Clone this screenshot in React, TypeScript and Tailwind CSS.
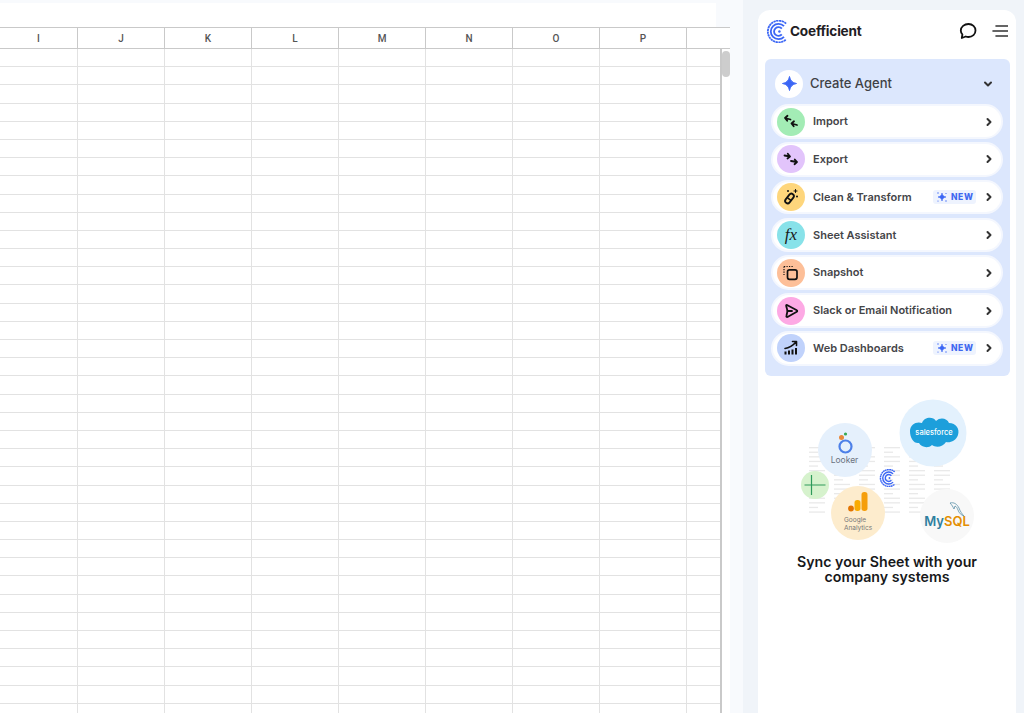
import type { ReactNode } from 'react';

const columns = ['I', 'J', 'K', 'L', 'M', 'N', 'O', 'P', ''];
const rowNumbers = Array.from({ length: 37 }, (_, i) => i);

function Chevron() {
  return (
    <svg width="8" height="10" viewBox="0 0 8 10" fill="none" stroke="#333" strokeWidth="2" strokeLinecap="round" strokeLinejoin="round">
      <path d="M2.500 2 5.500 5 2.500 8" />
    </svg>
  );
}

function Sparkle({ size, color = '#3b66f5' }: { size: number; color?: string }) {
  return (
    <svg width={size} height={size} viewBox="0 0 16 16" fill={color}>
      <path d="M8 .5C8.800 4.800 11 7.200 15.500 8 11 8.800 8.800 11.200 8 15.500 7.200 11.200 5 8.800.5 8 5 7.200 7.200 4.800 8 .5Z" stroke={color} strokeWidth="1" strokeLinejoin="round" />
    </svg>
  );
}

function NewBadge() {
  return (
    <span className="flex items-center gap-[3px] h-[14px] w-[43px] pl-[3px] rounded-[3px] bg-[#eef3fe] text-[8.5px] font-extrabold tracking-[0.6px] text-[#3f68f0]">
      <svg width="12" height="12" viewBox="0 0 12 12" fill="#3b66f5">
        <path d="M6 2c.3 2.200 1.600 3.600 4 4-2.400.4-3.700 1.800-4 4-.3-2.200-1.600-3.600-4-4 2.400-.4 3.700-1.800 4-4Z" stroke="#3b66f5" strokeWidth=".6" />
        <circle cx="2" cy="2" r=".7" />
        <circle cx="10" cy="2.500" r=".6" />
        <circle cx="2" cy="10" r=".6" />
        <circle cx="10" cy="10" r=".7" />
      </svg>
      NEW
    </span>
  );
}

const stroke = { fill: 'none', stroke: '#111', strokeWidth: 1.8, strokeLinecap: 'round', strokeLinejoin: 'round' } as const;

const ImportIcon = (
  <svg width="16" height="16" viewBox="0 0 16 16" {...stroke}>
    <path d="M7.500 5.500 2 4M4.500 1.800 2 4l2.200 2.800" />
    <path d="M14 11 8.500 9.500M11 7.300 8.500 9.500l2.200 2.800" />
  </svg>
);

const ExportIcon = (
  <svg width="16" height="16" viewBox="0 0 16 16" {...stroke}>
    <path d="M1.500 4.500 7 5.500M4.800 2.800 7 5.500 4.500 7.500" />
    <path d="M8 10l6 1M11.800 8.500 14 11l-2.500 2.200" />
  </svg>
);

const WandIcon = (
  <svg width="18" height="18" viewBox="0 0 18 18" fill="none" stroke="#111">
    <rect x="-2.500" y="-5.500" width="5" height="11" rx="2.500" transform="translate(7.500 10.500) rotate(38)" strokeWidth="1.800" />
    <path d="M5.500 9.800l3.800 2.900" strokeWidth="1.500" />
    <path d="M13.500 1.500v3M12 3h3" strokeWidth="1" strokeLinecap="round" />
    <circle cx="6" cy="3" r="1" fill="#111" stroke="none" />
    <circle cx="15" cy="8.500" r="1" fill="#111" stroke="none" />
  </svg>
);

const FxIcon = (
  <span className="font-['Liberation_Serif',serif] italic text-[17px] leading-none text-[#1a1a1a]">fx</span>
);

const SnapshotIcon = (
  <svg width="16" height="16" viewBox="0 0 16 16" fill="none" stroke="#111">
    <path d="M1 1.500h9M1 1.500v8.500" strokeWidth="1.200" strokeDasharray="1.200 1.300" />
    <rect x="4.500" y="4.800" width="9.500" height="9.500" rx="2" strokeWidth="1.700" />
  </svg>
);

const SendIcon = (
  <svg width="16" height="16" viewBox="0 0 16 16" fill="none" stroke="#111" strokeWidth="1.800" strokeLinejoin="round" strokeLinecap="round">
    <path d="M4 2 13.800 7.300c.6.300.6 1.100 0 1.400L4.500 14c-.8.300-1.300-.3-1.100-1L4.500 8 3.200 3c-.2-.8.200-1.300.8-1Z" />
    <path d="M4.500 8H9" />
  </svg>
);

const DashIcon = (
  <svg width="16" height="16" viewBox="0 0 16 16" fill="none" stroke="#111" strokeLinecap="round">
    <path d="M2 8.500c4-.5 7.500-2.500 11-6.500M9.500 1.500h4v4" strokeWidth="1.600" strokeLinejoin="round" />
    <path d="M2.500 11.500v3M6 10.500v4M9.500 9.500v5M13 8v6.500" strokeWidth="2" strokeLinecap="butt" />
  </svg>
);

type Item = { label: string; color: string; icon: ReactNode; isNew?: boolean };

const items: Item[] = [
  { label: 'Import', color: 'bg-[#a3ecb5]', icon: ImportIcon },
  { label: 'Export', color: 'bg-[#e2c4fb]', icon: ExportIcon },
  { label: 'Clean & Transform', color: 'bg-[#fed67c]', icon: WandIcon, isNew: true },
  { label: 'Sheet Assistant', color: 'bg-[#88e2e9]', icon: FxIcon },
  { label: 'Snapshot', color: 'bg-[#fdbf98]', icon: SnapshotIcon },
  { label: 'Slack or Email Notification', color: 'bg-[#fda9e4]', icon: SendIcon },
  { label: 'Web Dashboards', color: 'bg-[#c0d2fb]', icon: DashIcon, isNew: true },
];

function CoefLogo({ size }: { size: number }) {
  return (
    <svg width={size} height={size} viewBox="0 0 24 24" fill="none" stroke="#3b66f5" strokeLinecap="butt">
      <path d="M21 3.800A11.300 11.300 0 1 0 21 20.200" strokeWidth="1.900" strokeDasharray="2.400 .5" />
      <path d="M18.800 6.500A8 8 0 1 0 18.800 17.500" strokeWidth="1.900" />
      <path d="M16.500 9A4.600 4.600 0 1 0 16.500 15" strokeWidth="1.900" />
      <circle cx="14" cy="12" r="1.300" fill="#3b66f5" stroke="none" />
    </svg>
  );
}

function Illustration() {
  const lineRows = [0, 1, 2, 3, 4, 5, 6, 7, 8, 9, 10, 11, 12, 13, 14];
  const lineCols = [29, 54, 79, 104, 129, 154];
  return (
    <svg width="210" height="155" viewBox="0 0 210 155" className="block">
      {lineCols.map((x) =>
        lineRows.map((r) => (
          <rect key={x + '-' + r} x={x} y={57 + r * 4.600} width={r % 3 === 1 ? 9 : 16} height="1.300" fill="#e9e9e9" />
        ))
      )}
      <circle cx="153" cy="43" r="33.500" fill="#e3f1fd" />
      <path d="M130 41c0-7 7-10 12-8 2-6 11-7 14-2 4-4 11-3 13 2 7 0 11 6 9 12-2 6-8 8-12 7-3 5-10 6-14 3-4 4-11 2-13-2-5 1-9-5-9-12Z" fill="#1d9fdb" />
      <text x="154" y="45" textAnchor="middle" fontSize="7.500" fill="#fff" fontFamily="Inter, sans-serif" fontWeight="500">salesforce</text>

      <circle cx="65" cy="60" r="27" fill="#e5f0fc" />
      <circle cx="65.500" cy="56.500" r="6" fill="none" stroke="#4d80e8" strokeWidth="2.200" />
      <circle cx="61.500" cy="47.500" r="2.500" fill="#e8873a" />
      <circle cx="65.500" cy="44" r="1.600" fill="#34a853" />
      <text x="64.500" y="73" textAnchor="middle" fontSize="8.500" fill="#6b7280" fontFamily="Inter, sans-serif">Looker</text>

      <circle cx="35" cy="95" r="14" fill="#d6f2cd" />
      <path d="M24.500 95h21M31.500 85v20" stroke="#2e9a5b" strokeWidth="1.200" />

      <g transform="translate(99 79)">
        <CoefLogo size={18} />
      </g>

      <circle cx="78" cy="123" r="27" fill="#fdeccd" />
      <rect x="81.500" y="102" width="6" height="19" rx="2.700" fill="#f59e0b" />
      <rect x="74.500" y="110" width="6" height="11" rx="2.700" fill="#f9ab00" />
      <circle cx="71" cy="118.500" r="2.900" fill="#e37400" />
      <text x="75" y="132" textAnchor="middle" fontSize="6.500" fill="#777" fontFamily="Inter, sans-serif">Google</text>
      <text x="78" y="139.500" textAnchor="middle" fontSize="6.500" fill="#777" fontFamily="Inter, sans-serif">Analytics</text>

      <circle cx="167" cy="126" r="27" fill="#f8f8f8" />
      <text x="167" y="136" textAnchor="middle" fontSize="13" fontWeight="600" fontFamily="Inter, sans-serif">
        <tspan fill="#2f7f9f">My</tspan>
        <tspan fill="#e48e00">SQL</tspan>
      </text>
      <path d="M170 113c4-1 7 1 9 5 1 3 3 6 5 8-3-1-5-3-6-6-1-2-1-3-3-4l-1 3c-1-2-2-4-4-6Z" fill="none" stroke="#5c91a8" strokeWidth=".8" />
    </svg>
  );
}

export default function App() {
  return (
    <div className="flex h-[713px] w-[1024px] overflow-hidden bg-[#f0f4f9] font-['Inter',sans-serif]">
      {/* sheet */}
      <div className="w-[743px] shrink-0 bg-[#f8fafd]">
        <div className="h-[3px]" />
        <div className="h-[24px] w-[716px] bg-white" />
        <div className="w-[730px] bg-white font-['Roboto',sans-serif]">
          <div className="grid grid-cols-[78px_repeat(8,87px)_36px_1fr] h-[22px] border-y border-[#c9c9c9]">
            {columns.map((c, i) => (
              <div key={i} className="flex items-center justify-center border-r border-[#c9c9c9] text-[10px] font-medium text-[#555]">
                {c}
              </div>
            ))}
            <div className="border-r-2 border-[#c4c4c4]" />
            <div className="bg-[#f8f8f8]" />
          </div>
          <div className="flex">
            <div className="w-[722px] border-r-2 border-[#c9c9c9]">
              {rowNumbers.map((r) => (
                <div key={r} className="grid grid-cols-[78px_repeat(8,87px)_1fr] h-[18.2px] border-b border-[#e2e2e2]">
                  {columns.map((_, i) => (
                    <div key={i} className="border-r border-[#e2e2e2]" />
                  ))}
                </div>
              ))}
            </div>
            <div className="w-[8px] pt-[2px]">
              <div className="h-[26px] w-[8px] rounded-full bg-[#cdcdcd]" />
            </div>
          </div>
        </div>
      </div>

      {/* side panel */}
      <div className="w-[15px] shrink-0" />
      <div className="mt-[10px] w-[258px] shrink-0 rounded-t-[12px] bg-white">
        <div className="flex items-center h-[42px] pl-[8px] pr-[8px]">
          <CoefLogo size={23} />
          <span className="ml-[1px] text-[13.6px] font-bold text-[#1f2024] tracking-[-0.2px]">Coefficient</span>
          <svg className="ml-auto" width="18" height="18" viewBox="0 0 18 18" fill="none" stroke="#111" strokeWidth="1.800" strokeLinejoin="round">
            <path d="M9.500 2C13.500 2 16.500 4.800 16.500 8.500S13.500 15 9.500 15c-1 0-2-.2-2.800-.5L2.800 16l.6-3.500C2.300 11.300 1.800 10 1.800 8.500 1.800 4.800 5.300 2 9.500 2Z" />
          </svg>
          <svg className="ml-[15px]" width="16" height="14" viewBox="0 0 16 14" fill="none" stroke="#333" strokeWidth="1.600" strokeLinecap="round">
            <path d="M4 2h11.500M1 7h14.500M4 12h11.500" />
          </svg>
        </div>

        <div className="ml-[7px] mt-[7px] w-[245px] rounded-[6px] bg-[#dce7fd] pl-[6px] pr-[7px] pt-[11px] pb-[10px]">
          <div className="flex items-center h-[27px] mb-[7.300px] pl-[4px] pr-[10px]">
            <span className="flex items-center justify-center w-[28px] h-[28px] rounded-full bg-white">
              <Sparkle size={15} />
            </span>
            <span className="ml-[7px] text-[13px] font-medium text-[#3f4145]">Create Agent</span>
            <svg className="ml-auto" width="10" height="8" viewBox="0 0 10 8" fill="none" stroke="#333" strokeWidth="2" strokeLinecap="round" strokeLinejoin="round">
              <path d="M2 2.500 5 5.500 8 2.500" />
            </svg>
          </div>
          <div className="flex flex-col gap-[3.3px]">
            {items.map((item) => (
              <div key={item.label} className="flex items-center h-[34.5px] rounded-full bg-white border-2 border-[#f4f7fe] pl-[4px] pr-[8px]">
                <span className={'flex items-center justify-center w-[28px] h-[28px] shrink-0 rounded-full ' + item.color}>{item.icon}</span>
                <span className="ml-[8px] text-[11px] font-semibold text-[#444548]">{item.label}</span>
                <span className="ml-auto flex items-center gap-[9px]">
                  {item.isNew && <NewBadge />}
                  <Chevron />
                </span>
              </div>
            ))}
          </div>
        </div>

        <div className="mt-[14px] ml-[22px]">
          <Illustration />
        </div>
        <h2 className="mt-[9px] text-center text-[14.2px] leading-[15.500px] font-semibold text-[#17181a]">
          Sync your Sheet with your
          <br />
          company systems
        </h2>
      </div>
    </div>
  );
}
